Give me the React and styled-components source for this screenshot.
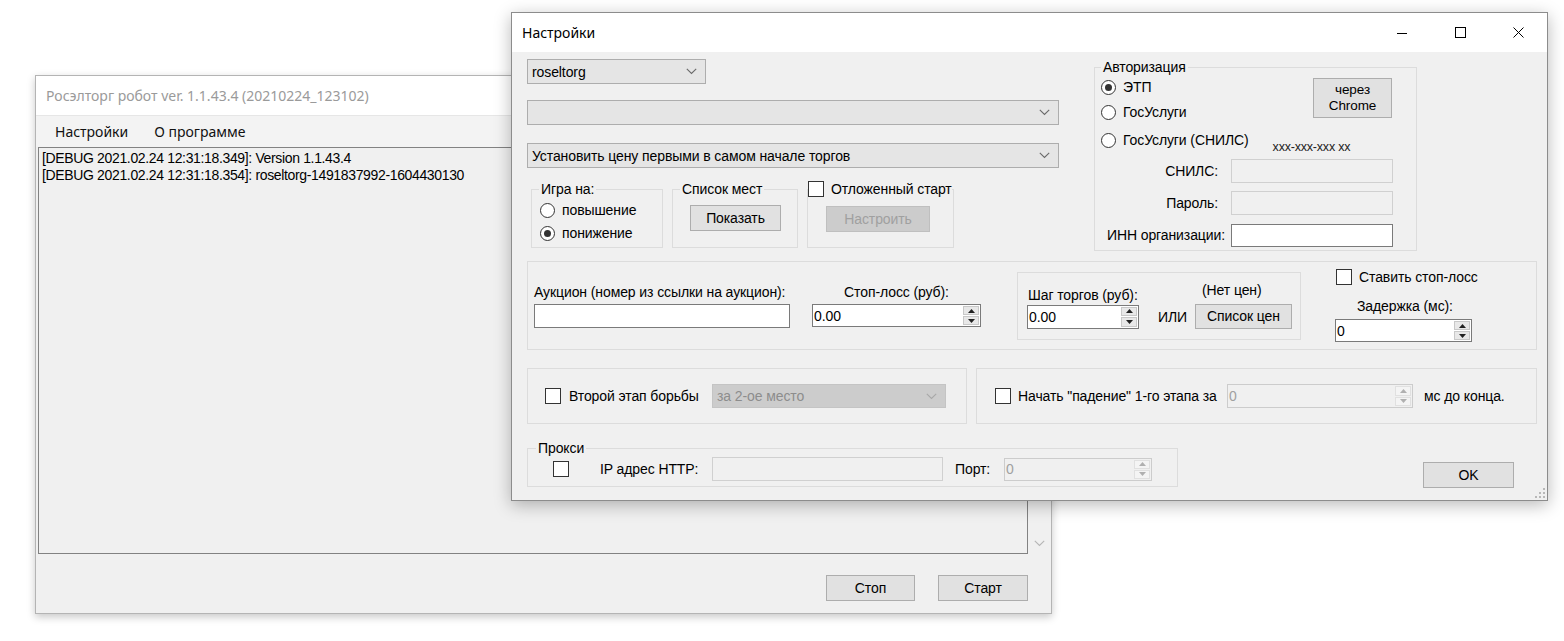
import React from 'react';
import styled, { createGlobalStyle } from 'styled-components';

const GlobalStyle = createGlobalStyle`
  html, body { margin: 0; padding: 0; background: #ffffff; }
  body { font-family: "Liberation Sans", Arial, sans-serif; color: #000; }
  * { box-sizing: border-box; }
`;

const UI_FONT = '"Liberation Sans", Arial, sans-serif';
const SYS_FONT = '"Noto Sans", "Open Sans", sans-serif';
const LS = '-0.1px';

const Desktop = styled.div`
  position: relative;
  width: 1564px;
  height: 641px;
  overflow: hidden;
  background: #ffffff;
`;

const Window = styled.div`
  position: absolute;
  left: ${(p) => p.$x}px;
  top: ${(p) => p.$y}px;
  width: ${(p) => p.$w}px;
  height: ${(p) => p.$h}px;
  display: flex;
  flex-direction: column;
  background: #f0f0f0;
  border: 1px solid ${(p) => p.$border};
  box-shadow: ${(p) => p.$shadow};
`;

/* ---------- main window ---------- */
const MainTitle = styled.div`
  height: 39px;
  flex: none;
  background: #ffffff;
  display: flex;
  align-items: center;
  padding-left: 10px;
  font-family: ${SYS_FONT};
  font-size: 14px;
  color: #9a9a9a;
`;

const MenuBar = styled.div`
  height: 32px;
  flex: none;
  display: flex;
  align-items: center;
  gap: 26px;
  padding-left: 19px;
  background: #f3f3f3;
  border-top: 1px solid #e6e6e6;
`;

const MenuItem = styled.span`
  font-family: ${SYS_FONT};
  font-size: 14px;
  color: #111;
`;

const MainBody = styled.div`
  display: flex;
  flex: none;
  height: 407px;
  padding-left: 2px;
`;

const LogArea = styled.div`
  width: 990px;
  height: 407px;
  border: 1px solid #828282;
  background: #f0f0f0;
  padding: 2px 3px;
  font-family: ${UI_FONT};
  font-size: 14px;
  letter-spacing: -0.35px;
  line-height: 17px;
  color: #000;
`;

const ScrollGutter = styled.div`
  flex: 1;
  display: flex;
  align-items: flex-end;
  justify-content: center;
  padding-bottom: 7px;
`;

const MainFooter = styled.div`
  display: flex;
  justify-content: flex-end;
  gap: 23px;
  padding: 21px 23px 0 0;
`;

/* ---------- common controls ---------- */
const Button = styled.div`
  width: ${(p) => p.$w}px;
  height: ${(p) => p.$h || 26}px;
  flex: none;
  display: flex;
  align-items: center;
  justify-content: center;
  text-align: center;
  background: ${(p) => (p.$disabled ? '#cccccc' : '#e1e1e1')};
  border: 1px solid ${(p) => (p.$disabled ? '#bfbfbf' : '#adadad')};
  color: ${(p) => (p.$disabled ? '#a0a0a0' : '#000')};
  font-family: ${UI_FONT};
  font-size: 14px;
  letter-spacing: ${LS};
  line-height: 16px;
`;

const Text = styled.span`
  font-family: ${UI_FONT};
  font-size: 14px;
  letter-spacing: ${LS};
  line-height: 16px;
  white-space: nowrap;
  color: #000;
`;

const ComboBox = styled.div`
  width: ${(p) => p.$w}px;
  height: ${(p) => p.$h || 25}px;
  flex: none;
  display: flex;
  align-items: center;
  justify-content: space-between;
  padding: 0 8px 0 4px;
  background: ${(p) => (p.$disabled ? '#cccccc' : '#e5e5e5')};
  border: 1px solid ${(p) => (p.$disabled ? '#c4c4c4' : '#adadad')};
  font-family: ${UI_FONT};
  font-size: 14px;
  letter-spacing: ${LS};
  color: ${(p) => (p.$disabled ? '#8d8d8d' : '#000')};
`;

const Chevron = ({ color = '#6a6a6a' }) => (
  <svg width="11" height="7" viewBox="0 0 11 7">
    <path d="M0.8 0.8 L5.5 5.5 L10.2 0.8" fill="none" stroke={color} strokeWidth="1.1" />
  </svg>
);

const Combo = ({ w, h, text, disabled }) => (
  <ComboBox $w={w} $h={h} $disabled={disabled}>
    <span>{text}</span>
    <Chevron color={disabled ? '#a8a8a8' : '#6a6a6a'} />
  </ComboBox>
);

const TextBox = styled.div`
  width: ${(p) => p.$w}px;
  height: ${(p) => p.$h || 24}px;
  flex: none;
  background: ${(p) => (p.$disabled ? '#f0f0f0' : '#ffffff')};
  border: 1px solid ${(p) => (p.$disabled ? '#d0d0d0' : '#7a7a7a')};
`;

const NumBox = styled.div`
  width: ${(p) => p.$w}px;
  height: ${(p) => p.$h || 24}px;
  flex: none;
  display: flex;
  align-items: stretch;
  background: ${(p) => (p.$disabled ? '#f0f0f0' : '#ffffff')};
  border: 1px solid ${(p) => (p.$disabled ? '#cccccc' : '#7a7a7a')};
`;

const NumValue = styled.div`
  flex: 1;
  display: flex;
  align-items: center;
  padding-left: 1px;
  font-family: ${UI_FONT};
  font-size: 14px;
  letter-spacing: ${LS};
  color: ${(p) => (p.$disabled ? '#a0a0a0' : '#000')};
`;

const SpinCol = styled.div`
  width: 17px;
  display: flex;
  flex-direction: column;
  gap: 1px;
  padding: 1px 1px 1px 0;
`;

const SpinBtn = styled.div`
  flex: 1;
  display: flex;
  align-items: center;
  justify-content: center;
  background: ${(p) => (p.$disabled ? '#f4f4f4' : '#e8e8e8')};
  border: 1px solid ${(p) => (p.$disabled ? '#e0e0e0' : '#c8c8c8')};
`;

const Tri = ({ up, color }) => (
  <svg width="7" height="4" viewBox="0 0 7 4">
    <path d={up ? 'M0 4 L3.5 0 L7 4 Z' : 'M0 0 L3.5 4 L7 0 Z'} fill={color} />
  </svg>
);

const Numeric = ({ w, h, value, disabled }) => {
  const c = disabled ? '#b0b0b0' : '#222';
  return (
    <NumBox $w={w} $h={h} $disabled={disabled}>
      <NumValue $disabled={disabled}>{value}</NumValue>
      <SpinCol>
        <SpinBtn $disabled={disabled}><Tri up color={c} /></SpinBtn>
        <SpinBtn $disabled={disabled}><Tri color={c} /></SpinBtn>
      </SpinCol>
    </NumBox>
  );
};

const RadioCircle = styled.span`
  width: 15px;
  height: 15px;
  flex: none;
  border-radius: 50%;
  border: 1px solid #333;
  background: #fff;
  display: flex;
  align-items: center;
  justify-content: center;
  &::after {
    content: '';
    width: 7px;
    height: 7px;
    border-radius: 50%;
    background: ${(p) => (p.$checked ? '#333' : 'transparent')};
  }
`;

const ChoiceRow = styled.div`
  display: flex;
  align-items: center;
  gap: ${(p) => p.$gap ?? 7}px;
  height: ${(p) => p.$h || 22}px;
  margin-top: ${(p) => p.$mt || 0}px;
  padding-left: ${(p) => p.$pl || 0}px;
`;

const CheckSquare = styled.span`
  width: 16px;
  height: 16px;
  flex: none;
  border: 1px solid #333;
  background: #fff;
`;

const Radio = ({ checked, label, mt, h }) => (
  <ChoiceRow $mt={mt} $h={h}>
    <RadioCircle $checked={checked} />
    <Text>{label}</Text>
  </ChoiceRow>
);

/* ---------- group boxes ---------- */
const GroupBox = styled.fieldset`
  margin: 0;
  padding: 0;
  min-width: 0;
  flex: none;
  width: ${(p) => p.$w}px;
  height: ${(p) => p.$h}px;
  border: 1px solid #dcdcdc;
  display: ${(p) => (p.$row ? 'flex' : 'block')};
  align-items: center;
`;

const Legend = styled.legend`
  padding: 0 ${(p) => p.$pad ?? 2}px;
  margin-left: ${(p) => p.$ml ?? 7}px;
  line-height: 16px;
  font-family: ${UI_FONT};
  font-size: 14px;
  letter-spacing: ${LS};
  display: flex;
  align-items: center;
  gap: 7px;
`;

const GroupInner = styled.div`
  display: flex;
  flex-direction: ${(p) => (p.$col ? 'column' : 'row')};
  align-items: ${(p) => p.$align || 'flex-start'};
  padding: ${(p) => p.$pad || '0'};
`;

/* ---------- settings window ---------- */
const TitleBar = styled.div`
  height: 39px;
  flex: none;
  display: flex;
  align-items: center;
  background: #ffffff;
`;

const TitleText = styled.span`
  flex: 1;
  padding-left: 10px;
  font-family: ${SYS_FONT};
  font-size: 14px;
  color: #000;
`;

const CaptionBtn = styled.div`
  width: 58px;
  height: 39px;
  display: flex;
  align-items: center;
  justify-content: center;
`;

const SettingsBody = styled.div`
  position: relative;
  flex: 1;
  display: flex;
  flex-direction: column;
  padding: 7px 10px 0 15px;
`;

const TopRow = styled.div`
  display: flex;
  align-items: flex-start;
`;

const LeftCol = styled.div`
  width: 532px;
  display: flex;
  flex-direction: column;
`;

const Spaced = styled.div`
  margin-top: ${(p) => p.$mt || 0}px;
  margin-left: ${(p) => p.$ml || 0}px;
  display: flex;
  flex-direction: ${(p) => (p.$col ? 'column' : 'row')};
  align-items: ${(p) => p.$align || 'flex-start'};
  gap: ${(p) => p.$gap || 0}px;
`;

const AuthHead = styled.div`
  display: flex;
  padding: 1px 24px 0 6px;
`;

const RadioStack = styled.div`
  display: flex;
  flex-direction: column;
`;

const ChromeButton = styled(Button)`
  margin-left: auto;
  margin-top: 2px;
  font-size: 13.5px;
  line-height: 16px;
`;

const SnilsRow = styled.div`
  display: flex;
  align-items: flex-end;
  padding-left: 6px;
  margin-top: 6px;
`;

const Hint = styled.span`
  margin-left: 24px;
  margin-bottom: -2px;
  font-family: ${UI_FONT};
  font-size: 12.5px;
  letter-spacing: -0.2px;
  line-height: 12px;
  color: #222;
`;

const FieldGrid = styled.div`
  display: grid;
  grid-template-columns: 124px 162px;
  grid-auto-rows: 24px;
  column-gap: 6px;
  row-gap: 8px;
  margin-top: 8px;
  padding-left: 6px;
  align-items: center;
`;

const FieldLabel = styled(Text)`
  text-align: right;
  padding-right: ${(p) => p.$pr || 0}px;
`;

const Col = styled.div`
  display: flex;
  flex-direction: column;
  align-items: ${(p) => p.$align || 'flex-start'};
  margin-left: ${(p) => p.$ml || 0}px;
  gap: ${(p) => p.$gap || 0}px;
`;

const Pad = styled.span`
  display: block;
  flex: none;
  width: ${(p) => (p.$w ? `${p.$w}px` : 'auto')};
  padding-left: ${(p) => p.$pl || 0}px;
  margin-top: ${(p) => p.$mt || 0}px;
  margin-bottom: ${(p) => p.$mb || 0}px;
  margin-left: ${(p) => p.$ml || 0}px;
`;

const BottomRow = styled.div`
  display: flex;
  align-items: flex-start;
  margin-top: 16px;
`;

const OkButton = styled(Button)`
  margin-left: auto;
  margin-right: 23px;
  margin-top: 22px;
`;

const Grip = styled.svg`
  position: absolute;
  right: 2px;
  bottom: 2px;
`;

export default function App() {
  return (
    <>
      <GlobalStyle />
      <Desktop>
        {/* main window */}
        <Window $x={35} $y={75} $w={1017} $h={539} $border="#b4b4b4" $shadow="0 3px 8px rgba(0,0,0,0.22)">
          <MainTitle>Росэлторг робот ver. 1.1.43.4 (20210224_123102)</MainTitle>
          <MenuBar>
            <MenuItem>Настройки</MenuItem>
            <MenuItem>О программе</MenuItem>
          </MenuBar>
          <MainBody>
            <LogArea>
              [DEBUG 2021.02.24 12:31:18.349]: Version 1.1.43.4
              <br />
              [DEBUG 2021.02.24 12:31:18.354]: roseltorg-1491837992-1604430130
            </LogArea>
            <ScrollGutter>
              <Chevron color="#b5b5b5" />
            </ScrollGutter>
          </MainBody>
          <MainFooter>
            <Button $w={89}>Стоп</Button>
            <Button $w={90}>Старт</Button>
          </MainFooter>
        </Window>

        {/* settings window */}
        <Window $x={511} $y={12} $w={1037} $h={489} $border="#8c8c8c" $shadow="0 4px 16px rgba(0,0,0,0.28)">
          <TitleBar>
            <TitleText>Настройки</TitleText>
            <CaptionBtn>
              <svg width="10" height="10" viewBox="0 0 10 10"><path d="M0 5.5 H10" stroke="#000" strokeWidth="1" /></svg>
            </CaptionBtn>
            <CaptionBtn>
              <svg width="11" height="11" viewBox="0 0 11 11"><rect x="0.5" y="0.5" width="10" height="10" fill="none" stroke="#000" strokeWidth="1" /></svg>
            </CaptionBtn>
            <CaptionBtn>
              <svg width="11" height="11" viewBox="0 0 11 11"><path d="M0.5 0.5 L10.5 10.5 M10.5 0.5 L0.5 10.5" stroke="#000" strokeWidth="1" /></svg>
            </CaptionBtn>
          </TitleBar>

          <SettingsBody>
            <TopRow>
              <LeftCol>
                <Combo w={179} text="roseltorg" />
                <Spaced $mt={16}><Combo w={532} text="" /></Spaced>
                <Spaced $mt={18}><Combo w={532} text="Установить цену первыми в самом начале торгов" /></Spaced>
                <Spaced $mt={13} $ml={4} $gap={9}>
                  <GroupBox $w={132} $h={67}>
                    <Legend>Игра на:</Legend>
                    <GroupInner $col $pad="2px 0 0 8px">
                      <Radio label="повышение" />
                      <Radio label="понижение" checked mt={1} />
                    </GroupInner>
                  </GroupBox>
                  <GroupBox $w={126} $h={67}>
                    <Legend>Список мест</Legend>
                    <GroupInner $pad="8px 0 0 17px">
                      <Button $w={91}>Показать</Button>
                    </GroupInner>
                  </GroupBox>
                  <GroupBox $w={147} $h={67}>
                    <Legend $ml={0} $pad={0}>
                      <CheckSquare />
                      <Text>Отложенный старт</Text>
                    </Legend>
                    <GroupInner $pad="9px 0 0 18px">
                      <Button $w={104} $disabled>Настроить</Button>
                    </GroupInner>
                  </GroupBox>
                </Spaced>
              </LeftCol>

              <Spaced $ml={35}>
                <GroupBox $w={323} $h={192}>
                  <Legend $ml={6}>Авторизация</Legend>
                  <AuthHead>
                    <RadioStack>
                      <Radio label="ЭТП" checked />
                      <Radio label="ГосУслуги" mt={3} />
                    </RadioStack>
                    <ChromeButton $w={79} $h={40}>через<br />Chrome</ChromeButton>
                  </AuthHead>
                  <SnilsRow>
                    <Radio label="ГосУслуги (СНИЛС)" />
                    <Hint>xxx-xxx-xxx xx</Hint>
                  </SnilsRow>
                  <FieldGrid>
                    <FieldLabel $pr={7}>СНИЛС:</FieldLabel>
                    <TextBox $w={162} $disabled />
                    <FieldLabel $pr={7}>Пароль:</FieldLabel>
                    <TextBox $w={162} $disabled />
                    <FieldLabel>ИНН организации:</FieldLabel>
                    <TextBox $w={162} $h={23} />
                  </FieldGrid>
                </GroupBox>
              </Spaced>
            </TopRow>

            {/* auction group */}
            <Spaced $mt={10}>
              <GroupBox $w={1010} $h={89} $row>
                <Col $ml={6} $gap={4}>
                  <Text>Аукцион (номер из ссылки на аукцион):</Text>
                  <TextBox $w={256} />
                </Col>
                <Col $ml={22} $gap={4} $align="center">
                  <Text>Стоп-лосс (руб):</Text>
                  <Numeric w={169} h={23} value="0.00" />
                </Col>
                <Spaced $ml={36}>
                  <GroupBox $w={284} $h={68}>
                    <GroupInner $align="flex-end" $pad="8px 0 0 9px">
                      <Col $gap={1}>
                        <Pad $pl={1}><Text>Шаг торгов (руб):</Text></Pad>
                        <Numeric w={112} value="0.00" />
                      </Col>
                      <Pad $ml={19} $mb={3}><Text>ИЛИ</Text></Pad>
                      <Col $ml={8} $gap={5}>
                        <Pad $pl={7}><Text>(Нет цен)</Text></Pad>
                        <Button $w={97} $h={25}>Список цен</Button>
                      </Col>
                    </GroupInner>
                  </GroupBox>
                </Spaced>
                <Col $ml={34}>
                  <ChoiceRow $h={16} $pl={1}>
                    <CheckSquare />
                    <Text>Ставить стоп-лосс</Text>
                  </ChoiceRow>
                  <Pad $pl={22} $mt={12}><Text>Задержка (мс):</Text></Pad>
                  <Pad $mt={4}><Numeric w={137} h={23} value="0" /></Pad>
                </Col>
              </GroupBox>
            </Spaced>

            {/* second stage row */}
            <Spaced $mt={18} $gap={9}>
              <GroupBox $w={440} $h={56} $row>
                <ChoiceRow $pl={17} $gap={8}>
                  <CheckSquare />
                  <Pad $w={143}><Text>Второй этап борьбы</Text></Pad>
                </ChoiceRow>
                <Combo w={234} h={24} text="за 2-ое место" disabled />
              </GroupBox>
              <GroupBox $w={561} $h={56} $row>
                <ChoiceRow $pl={18} $gap={7}>
                  <CheckSquare />
                  <Pad $w={209}><Text>Начать "падение" 1-го этапа за</Text></Pad>
                </ChoiceRow>
                <Numeric w={186} value="0" disabled />
                <Pad $ml={11}><Text>мс до конца.</Text></Pad>
              </GroupBox>
            </Spaced>

            {/* proxy row */}
            <BottomRow>
              <GroupBox $w={651} $h={47}>
                <Legend $ml={8}>Прокси</Legend>
                <GroupInner $align="center" $pad="1px 0 0 25px">
                  <CheckSquare />
                  <Pad $ml={31} $w={112}><Text>IP адрес HTTP:</Text></Pad>
                  <TextBox $w={231} $disabled />
                  <Pad $ml={12} $w={49}><Text>Порт:</Text></Pad>
                  <Numeric w={148} h={23} value="0" disabled />
                </GroupInner>
              </GroupBox>
              <OkButton $w={91}>OK</OkButton>
            </BottomRow>

            <Grip width="10" height="10" viewBox="0 0 10 10">
              {[[8, 0], [8, 4], [4, 4], [8, 8], [4, 8], [0, 8]].map(([x, y]) => (
                <rect key={`${x}-${y}`} x={x} y={y} width="2" height="2" fill="#b8b8b8" />
              ))}
            </Grip>
          </SettingsBody>
        </Window>
      </Desktop>
    </>
  );
}
